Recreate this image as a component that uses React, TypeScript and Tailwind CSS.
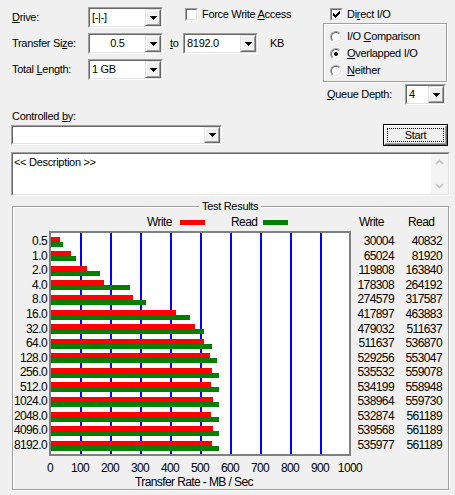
import React from "react";

const sizes = ["0.5", "1.0", "2.0", "4.0", "8.0", "16.0", "32.0", "64.0", "128.0", "256.0", "512.0", "1024.0", "2048.0", "4096.0", "8192.0"];
const writes = [30004, 65024, 119808, 178308, 274579, 417897, 479032, 511637, 529256, 535532, 534199, 538964, 532874, 539568, 535977];
const reads = [40832, 81920, 163840, 264192, 317587, 463883, 511637, 536870, 553047, 559078, 558948, 559730, 561189, 561189, 561189];
const axis = ["0", "100", "200", "300", "400", "500", "600", "700", "800", "900", "1000"];

function DropBtn() {
  return (
    <div className="w-[16px] h-full shrink-0 border border-t-[#e3e3e3] border-l-[#e3e3e3] border-r-[#696969] border-b-[#696969]">
      <div className="w-full h-full border border-t-white border-l-white border-r-[#a0a0a0] border-b-[#a0a0a0] bg-[#f0f0f0] flex items-center justify-center">
        <svg width="7" height="4" viewBox="0 0 7 4" shapeRendering="crispEdges">
          <path d="M0 0H7V1H6V2H5V3H4V4H3V3H2V2H1V1H0Z" fill="#000" />
        </svg>
      </div>
    </div>
  );
}

function Sunken({ className = "", innerClassName = "", children }: { className?: string; innerClassName?: string; children?: React.ReactNode }) {
  return (
    <div className={"border border-t-[#a0a0a0] border-l-[#a0a0a0] border-r-white border-b-white " + className}>
      <div className={"w-full h-full border border-t-[#696969] border-l-[#696969] border-r-[#e3e3e3] border-b-[#e3e3e3] " + innerClassName}>
        {children}
      </div>
    </div>
  );
}

function Combo({ className, text = "", center = false }: { className: string; text?: string; center?: boolean }) {
  return (
    <Sunken className={"shrink-0 " + className} innerClassName="flex bg-white">
      <div className={"flex-1 min-w-0 flex items-center px-[2px] " + (center ? "justify-center" : "")}>{text}</div>
      <DropBtn />
    </Sunken>
  );
}

const checkPix: [number, number, number][] = [
  [6, 0, 1], [5, 1, 2], [0, 2, 1], [4, 2, 3], [0, 3, 2], [3, 3, 3], [0, 4, 5], [1, 5, 3], [2, 6, 1],
];

function Check({ checked = false }: { checked?: boolean }) {
  return (
    <Sunken className="w-[13px] h-[13px] shrink-0" innerClassName="bg-white flex items-center justify-center">
      {checked && (
        <svg width="7" height="7" viewBox="0 0 7 7" shapeRendering="crispEdges">
          {checkPix.map(([x, y, w], i) => (
            <rect key={i} x={x} y={y} width={w} height={1} fill="#000" />
          ))}
        </svg>
      )}
    </Sunken>
  );
}

function Radio({ on = false }: { on?: boolean }) {
  return (
    <div className="w-[12px] h-[12px] shrink-0 rounded-full border border-t-[#a0a0a0] border-l-[#a0a0a0] border-r-white border-b-white">
      <div className="w-full h-full rounded-full border border-t-[#696969] border-l-[#696969] border-r-[#e3e3e3] border-b-[#e3e3e3] bg-white flex items-center justify-center">
        {on && <div className="w-[4px] h-[4px] rounded-full bg-black" />}
      </div>
    </div>
  );
}

function Chevron({ up }: { up: boolean }) {
  return (
    <svg width="9" height="6" viewBox="0 0 9 6">
      <polyline
        points={up ? "1,5 4.5,1.5 8,5" : "1,1 4.5,4.5 8,1"}
        fill="none"
        stroke="#c2c2c2"
        strokeWidth="1.6"
      />
    </svg>
  );
}

export default function App() {
  return (
    <div className="w-[455px] h-[495px] overflow-hidden bg-[#f0f0f0] text-black font-['Liberation_Sans',Arial,sans-serif] text-[11px] leading-[13px] tracking-[-0.3px]">
      {/* top controls */}
      <div className="flex pt-[7px]">
        <div className="flex flex-col gap-[5px] pl-[12px]">
          <div className="flex items-center h-[21px]">
            <span className="w-[76px]">
              <u>D</u>rive:
            </span>
            <Combo className="w-[75px] h-[21px]" text="[-|-]" />
            <div className="self-start mt-[1px] ml-[22px] flex items-center gap-[4px] h-[13px]">
              <Check />
              <span>
                Force Write <u>A</u>ccess
              </span>
            </div>
          </div>
          <div className="flex items-center h-[21px]">
            <span className="w-[76px]">
              Transfer Si<u>z</u>e:
            </span>
            <Combo className="w-[75px] h-[21px]" text="0.5" center />
            <span className="ml-[7px] w-[13px]">
              <u>t</u>o
            </span>
            <Combo className="w-[75px] h-[21px]" text="8192.0" />
            <span className="ml-[12px]">KB</span>
          </div>
          <div className="flex items-center h-[21px]">
            <span className="w-[76px]">
              Total <u>L</u>ength:
            </span>
            <Combo className="w-[75px] h-[21px]" text="1 GB" />
          </div>
        </div>

        <div className="ml-auto mr-[8px] w-[124px] flex flex-col">
          <div className="mt-[1px] ml-[7px] flex items-center gap-[4px] h-[13px]">
            <Check checked />
            <span>
              Di<u>r</u>ect I/O
            </span>
          </div>
          <div className="mt-[2px] h-[59px] border border-[#a0a0a0] shadow-[inset_1px_1px_0_#fff,1px_1px_0_#fff] flex flex-col pt-[4px] pl-[6px]">
            <div className="h-[17px] flex items-center gap-[5px]">
              <Radio />
              <span>
                I/O <u>C</u>omparison
              </span>
            </div>
            <div className="h-[17px] flex items-center gap-[5px]">
              <Radio on />
              <span>
                <u>O</u>verlapped I/O
              </span>
            </div>
            <div className="h-[17px] flex items-center gap-[5px]">
              <Radio />
              <span>
                <u>N</u>either
              </span>
            </div>
          </div>
          <div className="mt-[2px] h-[21px] flex items-center pl-[4px]">
            <span>
              <u>Q</u>ueue Depth:
            </span>
            <Combo className="ml-auto mr-[1px] w-[41px] h-[21px]" text="4" />
          </div>
        </div>
      </div>

      {/* controlled by */}
      <div className="mt-[5px] pl-[12px] h-[13px]">
        Controlled <u>b</u>y:
      </div>
      <div className="mt-[1px] h-[22px] flex items-center pl-[11px] pr-[7px]">
        <Combo className="w-[211px] h-[20px]" />
        <div className="ml-auto w-[65px] h-[22px] border border-[#000]">
          <div className="w-full h-full border border-t-white border-l-white border-r-[#696969] border-b-[#696969]">
            <div className="w-full h-full border border-t-[#f0f0f0] border-l-[#f0f0f0] border-r-[#a0a0a0] border-b-[#a0a0a0] bg-[#f0f0f0] p-[1px]">
              <div className="w-full h-full border border-dotted border-black flex items-center justify-center">Start</div>
            </div>
          </div>
        </div>
      </div>

      {/* description */}
      <Sunken className="mt-[6px] ml-[11px] w-[439px] h-[44px]" innerClassName="flex bg-white">
        <div className="flex-1 pl-[1px] pt-[2px]">&lt;&lt; Description &gt;&gt;</div>
        <div className="w-[17px] bg-[#f4f4f4] flex flex-col justify-between items-center py-[5px]">
          <Chevron up />
          <Chevron up={false} />
        </div>
      </Sunken>

      {/* test results */}
      <fieldset className="mt-[4px] ml-[12px] w-[437px] h-[290px] border border-[#a0a0a0] shadow-[inset_1px_1px_0_#fff,1px_1px_0_#fff]">
        <legend className="ml-[186px] px-[3px] bg-[#f0f0f0] leading-[13px]">Test Results</legend>
        <div className="font-['Liberation_Sans',Arial,sans-serif] text-[12px] leading-[13px] tracking-[-0.6px]">
          <div className="mt-[3px] h-[13px] flex items-center">
            <span className="ml-[134px] w-[33px]">Write</span>
            <span className="w-[25px] h-[5px] bg-[#ff0000]" />
            <span className="ml-[26px] w-[32px]">Read</span>
            <span className="w-[25px] h-[5px] bg-[#008000]" />
            <span className="ml-[71px] w-[49px]">Write</span>
            <span>Read</span>
          </div>

          <div className="mt-[2px] flex">
            <div className="mt-[2px] w-[34px] h-[221px] flex flex-col pt-[1.4px]">
              {sizes.map((s) => (
                <div key={s} className="h-[14.57px] shrink-0 flex items-center justify-end">
                  {s}
                </div>
              ))}
            </div>
            <div className="ml-[2px] w-[302px] h-[225px] border-2 border-[#808080] bg-white">
              <svg width="298" height="221" shapeRendering="crispEdges" className="block">
                {[1, 2, 3, 4, 5, 6, 7, 8, 9].map((k) => (
                  <rect key={k} x={30 * k - 1} y={0} width={2} height={221} fill="#0000ff" />
                ))}
                {sizes.map((s, i) => {
                  const y = Math.round(3.7 + 14.57 * i);
                  return (
                    <g key={s}>
                      <rect x={0} y={y} width={Math.round(writes[i] * 0.0003)} height={5} fill="#ff0000" />
                      <rect x={0} y={y + 5} width={Math.round(reads[i] * 0.0003)} height={5} fill="#008000" />
                    </g>
                  );
                })}
              </svg>
            </div>
            <div className="mt-[2px] h-[221px] flex flex-col pt-[1.4px]">
              {sizes.map((s, i) => (
                <div key={s} className="h-[14.57px] shrink-0 flex items-center">
                  <span className="w-[43px] text-right">{writes[i]}</span>
                  <span className="w-[48px] text-right">{reads[i]}</span>
                </div>
              ))}
            </div>
          </div>

          <div className="mt-[6px] h-[13px] flex pl-[22px]">
            {axis.map((a) => (
              <span key={a} className="w-[30px] shrink-0 text-center">
                {a}
              </span>
            ))}
          </div>
          <div className="mt-[1px] h-[13px] pl-[122px]">Transfer Rate - MB / Sec</div>
        </div>
      </fieldset>
    </div>
  );
}
